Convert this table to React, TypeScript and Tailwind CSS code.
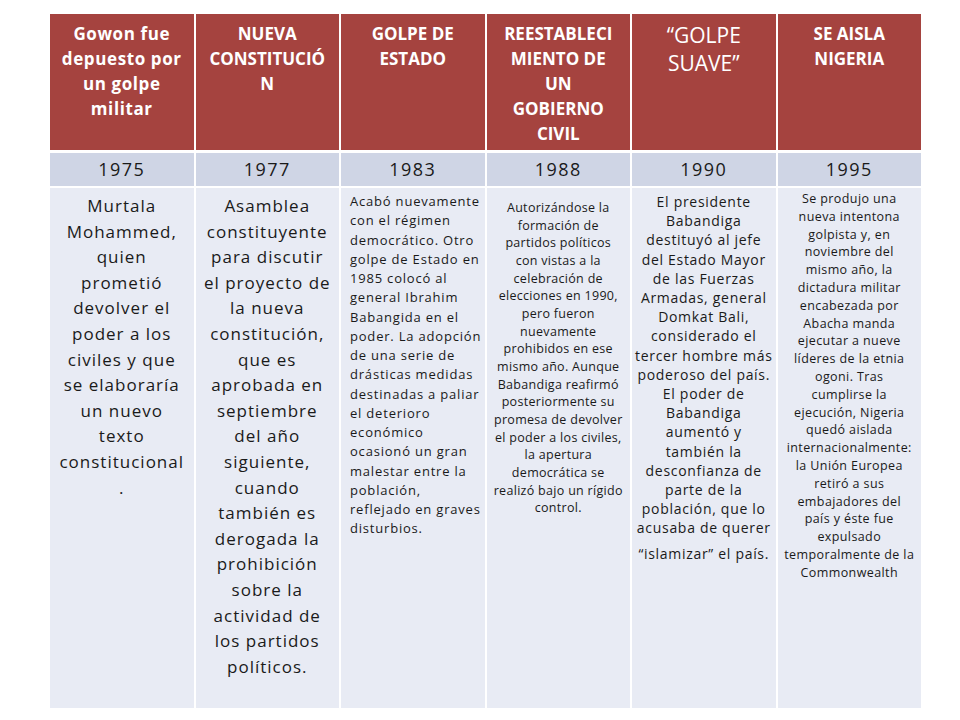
import React from 'react';

type Column = {
  head: string[];
  headClass: string;
  year: string;
  lines: string[];
  bodyClass: string;
};

const columns: Column[] = [
  {
    head: ['Gowon fue', 'depuesto por', 'un golpe', 'militar'],
    headClass: 'font-bold text-[17px] leading-[25px] tracking-[0.6px]',
    year: '1975',
    lines: [
      'Murtala',
      'Mohammed,',
      'quien',
      'prometió',
      'devolver el',
      'poder a los',
      'civiles y que',
      'se elaboraría',
      'un nuevo',
      'texto',
      'constitucional',
      '.',
    ],
    bodyClass: 'text-center text-[17px] leading-[25.6px] pt-[5px] tracking-[1px]',
  },
  {
    head: ['NUEVA', 'CONSTITUCIÓ', 'N'],
    headClass: 'font-bold text-[17px] leading-[25px]',
    year: '1977',
    lines: [
      'Asamblea',
      'constituyente',
      'para discutir',
      'el proyecto de',
      'la nueva',
      'constitución,',
      'que es',
      'aprobada en',
      'septiembre',
      'del año',
      'siguiente,',
      'cuando',
      'también es',
      'derogada la',
      'prohibición',
      'sobre la',
      'actividad de',
      'los partidos',
      'políticos.',
    ],
    bodyClass: 'text-center text-[17px] leading-[25.6px] pt-[5px] tracking-[1px]',
  },
  {
    head: ['GOLPE DE', 'ESTADO'],
    headClass: 'font-bold text-[17px] leading-[25px]',
    year: '1983',
    lines: [
      'Acabó nuevamente',
      'con el régimen',
      'democrático. Otro',
      'golpe de Estado en',
      '1985 colocó al',
      'general Ibrahim',
      'Babangida en el',
      'poder. La adopción',
      'de una serie de',
      'drásticas medidas',
      'destinadas a paliar',
      'el deterioro',
      'económico',
      'ocasionó un gran',
      'malestar entre la',
      'población,',
      'reflejado en graves',
      'disturbios.',
    ],
    bodyClass: 'text-left text-[13px] leading-[19.25px] pt-[4px] pl-[9px] tracking-[0.8px]',
  },
  {
    head: ['REESTABLECI', 'MIENTO DE', 'UN', 'GOBIERNO', 'CIVIL'],
    headClass: 'font-bold text-[17px] leading-[25px]',
    year: '1988',
    lines: [
      'Autorizándose la',
      'formación de',
      'partidos políticos',
      'con vistas a la',
      'celebración de',
      'elecciones en 1990,',
      'pero fueron',
      'nuevamente',
      'prohibidos en ese',
      'mismo año. Aunque',
      'Babandiga reafirmó',
      'posteriormente su',
      'promesa de devolver',
      'el poder a los civiles,',
      'la apertura',
      'democrática se',
      'realizó bajo un rígido',
      'control.',
    ],
    bodyClass: 'text-center text-[12.5px] leading-[17.65px] pt-[11px] tracking-[0.3px]',
  },
  {
    head: ['“GOLPE', 'SUAVE”'],
    headClass: 'font-normal text-[21px] leading-[28px]',
    year: '1990',
    lines: [
      'El presidente',
      'Babandiga',
      'destituyó al jefe',
      'del Estado Mayor',
      'de las Fuerzas',
      'Armadas, general',
      'Domkat Bali,',
      'considerado el',
      'tercer hombre más',
      'poderoso del país.',
      'El poder de',
      'Babandiga',
      'aumentó y',
      'también la',
      'desconfianza de',
      'parte de la',
      'población, que lo',
      'acusaba de querer',
    ],
    bodyClass: 'text-center text-[14px] leading-[19.2px] pt-[4px] tracking-[0.7px]',
  },
  {
    head: ['SE AISLA', 'NIGERIA'],
    headClass: 'font-bold text-[17px] leading-[25px]',
    year: '1995',
    lines: [
      'Se produjo una',
      'nueva intentona',
      'golpista y, en',
      'noviembre del',
      'mismo año, la',
      'dictadura militar',
      'encabezada por',
      'Abacha manda',
      'ejecutar a nueve',
      'líderes de la etnia',
      'ogoni. Tras',
      'cumplirse la',
      'ejecución, Nigeria',
      'quedó aislada',
      'internacionalmente:',
      'la Unión Europea',
      'retiró a sus',
      'embajadores del',
      'país y éste fue',
      'expulsado',
      'temporalmente de la',
      'Commonwealth',
    ],
    bodyClass: 'text-center text-[12.5px] leading-[17.8px] pt-[2px] tracking-[0.4px]',
  },
];

export default function App() {
  return (
    <div
      className="h-[720px] w-[960px] bg-white pt-[14px] pl-[50px]"
      style={{ fontFamily: '"Open Sans", "Noto Sans", sans-serif' }}
    >
      <div className="grid w-[871px] grid-cols-6 gap-x-[2px] bg-white">
        {/* header row */}
        {columns.map((c) => (
          <div
            key={c.year + 'h'}
            className={`h-[136px] bg-[#a5433f] pt-[7px] text-center text-white ${c.headClass}`}
          >
            {c.head.map((l) => (
              <div key={l} className="whitespace-nowrap">
                {l}
              </div>
            ))}
          </div>
        ))}

        {/* years */}
        {columns.map((c) => (
          <div
            key={c.year}
            className="mt-[3px] flex h-[33px] items-center justify-center bg-[#cfd5e5] text-[18px] tracking-[1.5px] text-[#1a1a1a]"
          >
            {c.year}
          </div>
        ))}

        {/* descriptions */}
        {columns.map((c) => (
          <div
            key={c.year + 'b'}
            className={`mt-[2px] h-[520px] bg-[#e8ebf4] text-[#1a1a1a] ${c.bodyClass}`}
          >
            {c.lines.map((l, i) => (
              <div key={i} className="whitespace-pre">
                {l}
              </div>
            ))}
            {c.year === '1990' && <div className="mt-[6px] whitespace-pre">“islamizar” el país.</div>}
          </div>
        ))}
      </div>
    </div>
  );
}
